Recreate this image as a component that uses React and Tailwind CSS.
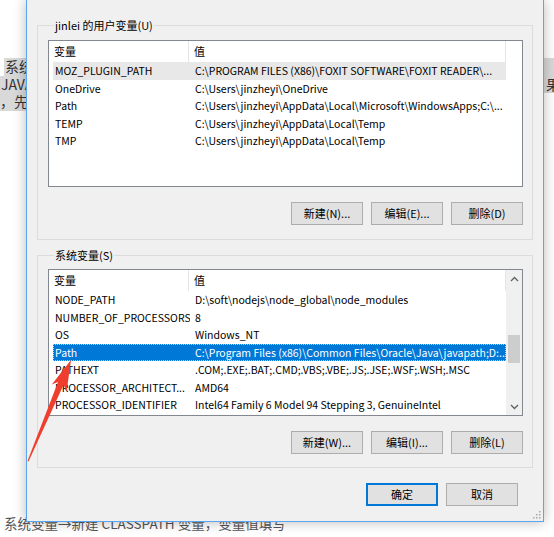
import React from "react";

const userVars = [
  ["MOZ_PLUGIN_PATH", "C:\\PROGRAM FILES (X86)\\FOXIT SOFTWARE\\FOXIT READER\\..."],
  ["OneDrive", "C:\\Users\\jinzheyi\\OneDrive"],
  ["Path", "C:\\Users\\jinzheyi\\AppData\\Local\\Microsoft\\WindowsApps;C:\\..."],
  ["TEMP", "C:\\Users\\jinzheyi\\AppData\\Local\\Temp"],
  ["TMP", "C:\\Users\\jinzheyi\\AppData\\Local\\Temp"],
];

const sysVars = [
  ["NODE_PATH", "D:\\soft\\nodejs\\node_global\\node_modules"],
  ["NUMBER_OF_PROCESSORS", "8"],
  ["OS", "Windows_NT"],
  ["Path", "C:\\Program Files (x86)\\Common Files\\Oracle\\Java\\javapath;D:..."],
  ["PATHEXT", ".COM;.EXE;.BAT;.CMD;.VBS;.VBE;.JS;.JSE;.WSF;.WSH;.MSC"],
  ["PROCESSOR_ARCHITECT...", "AMD64"],
  ["PROCESSOR_IDENTIFIER", "Intel64 Family 6 Model 94 Stepping 3, GenuineIntel"],
];

function Chevron({ up }) {
  return (
    <svg width="9" height="6" viewBox="0 0 9 6">
      <polyline
        points={up ? "1,5 4.5,1.5 8,5" : "1,1 4.5,4.5 8,1"}
        fill="none"
        stroke="#606060"
        strokeWidth="1.3"
      />
    </svg>
  );
}

function VarList({ rows, hover, selected, scroll }) {
  return (
    <div className="flex h-[147px] border border-[#828790] bg-white">
      <div className="flex w-[457px] flex-col">
        {/* header */}
        <div className="flex h-[21px] items-center border-r border-[#e5e5e5] text-[11px]">
          <div className="flex h-full w-[140px] shrink-0 items-center border-r border-[#e5e5e5] pl-[5px]">变量</div>
          <div className="pl-[5px]">值</div>
        </div>
        <div className="ml-[4px] flex flex-col">
          {rows.map(([name, value], i) => (
            <div
              key={name + i}
              className={
                "flex h-[17.6px] items-center whitespace-nowrap " +
                (i === selected
                  ? "bg-[#0078d7] text-white outline-1 -outline-offset-1 outline-dotted outline-[#f5c27a]"
                  : i === hover
                  ? "bg-[#e8e8e8]"
                  : "")
              }
            >
              <div className="w-[137px] shrink-0 overflow-hidden pl-[2px]">{name}</div>
              <div className="min-w-0 flex-1 overflow-hidden pl-[5px]">{value}</div>
            </div>
          ))}
        </div>
      </div>
      {scroll ? (
        <div className="flex w-[16px] flex-col bg-[#f0f0f0]">
          <div className="flex h-[17px] items-center justify-center">
            <Chevron up />
          </div>
          <div className="mx-[2px] mt-[48px] h-[28px] bg-[#cdcdcd]" />
          <div className="mt-auto flex h-[17px] items-center justify-center">
            <Chevron />
          </div>
        </div>
      ) : (
        <div className="w-[16px]" />
      )}
    </div>
  );
}

function Btn({ children, primary }) {
  return (
    <button
      className={
        "flex h-[23px] w-[72px] items-center justify-center bg-[#e1e1e1] text-[11px] text-black " +
        (primary ? "border-2 border-[#0078d7]" : "border border-[#adadad]")
      }
    >
      {children}
    </button>
  );
}

function Group({ label, children, className }) {
  return (
    <fieldset className={"border border-[#dcdcdc] pl-[10px] pr-[9px] " + className}>
      <legend className="ml-[6px] px-[1px] text-[11px] leading-[16px]">{label}</legend>
      {children}
    </fieldset>
  );
}

export default function App() {
  return (
    <div
      className="relative h-[537px] w-[554px] overflow-hidden bg-white"
      style={{ fontFamily: '"Noto Sans CJK SC", "Noto Sans", sans-serif' }}
    >
      {/* blog page behind the dialog */}
      <div className="flex h-full flex-col pb-[5px] pt-[58px] text-[14px] leading-[17.5px] text-[#333]">
        <div className="pl-[4px]">
          <div className="bg-[#d9d9d9] pl-[1px]">系统变量，新建</div>
        </div>
        <div className="flex justify-between bg-[#d9d9d9] pl-[1px]">
          <span>JAVA_HOME</span>
          <span className="mr-[-6px]">果</span>
        </div>
        <div className="w-[300px] bg-[#d9d9d9]">，先设置</div>
        <div className="mt-auto pl-[4px] text-[13.5px] leading-[18px] text-[#555]">
          系统变量→新建 CLASSPATH 变量，变量值填写
        </div>
      </div>

      {/* environment variables dialog */}
      <div className="absolute left-[26px] top-0 flex h-[522px] w-[518px] flex-col border-x border-b border-[#5aa5ef] bg-[#f0f0f0] px-[10px] pt-[17px] text-[10.5px] text-black shadow-[0_0_12px_rgba(0,0,0,0.28)]">
        <Group label="jinlei 的用户变量(U)" className="pb-[14px] pt-[7px]">
          <VarList rows={userVars} hover={0} />
          <div className="mt-[15px] flex justify-end gap-[8px]">
            <Btn>新建(N)...</Btn>
            <Btn>编辑(E)...</Btn>
            <Btn>删除(D)</Btn>
          </div>
        </Group>

        <Group label="系统变量(S)" className="mt-[7px] pb-[13px] pt-[6px]">
          <VarList rows={sysVars} selected={3} scroll />
          <div className="mt-[15px] flex justify-end gap-[8px]">
            <Btn>新建(W)...</Btn>
            <Btn>编辑(I)...</Btn>
            <Btn>删除(L)</Btn>
          </div>
        </Group>

        <div className="mt-[15px] flex justify-end gap-[8px] pr-[15px]">
          <Btn primary>确定</Btn>
          <Btn>取消</Btn>
        </div>

        {/* size grip */}
        <svg className="absolute bottom-[2px] right-[2px]" width="9" height="9" viewBox="0 0 9 9">
          {[
            [7, 1], [7, 4], [4, 4], [7, 7], [4, 7], [1, 7],
          ].map(([x, y]) => (
            <rect key={x + "-" + y} x={x} y={y} width="1.5" height="1.5" fill="#a8a8a8" />
          ))}
        </svg>
      </div>

      {/* red annotation arrow */}
      <svg className="pointer-events-none absolute inset-0" width="554" height="537" viewBox="0 0 554 537">
        <polygon
          points="71,360 66.7,391 63.5,385 28.5,461.5 27.5,461 58,382 51.8,384.5"
          fill="#ef3e2e"
        />
      </svg>
    </div>
  );
}
